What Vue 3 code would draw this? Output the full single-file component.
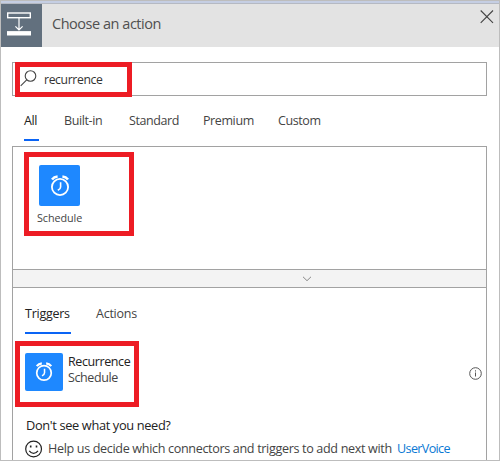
<script setup>
const categories = [
  { label: 'All', width: 15, active: true },
  { label: 'Built-in', width: 40 },
  { label: 'Standard', width: 49 },
  { label: 'Premium', width: 50 },
  { label: 'Custom', width: 43 },
]
</script>

<template>
  <main class="window">
    <div class="stripe"></div>
    <header class="header">
      <div class="header-icon">
        <svg width="41" height="43" viewBox="0 0 41 43" fill="none" stroke="#fff">
          <rect x="6.7" y="9" width="22.6" height="4.7" stroke-width="1.4" />
          <path d="M18 14v12M14.4 22.4l3.6 3.6 3.6-3.6" stroke-width="1.2" />
          <path d="M6 29.3h24" stroke-width="4.4" />
        </svg>
      </div>
      <h1>Choose an action</h1>
      <svg class="close" width="14" height="14" viewBox="0 0 14 14" fill="none" stroke="#444" stroke-width="1.1">
        <path d="M.7.5l12.3 12.3M13 .5L.7 12.8" />
      </svg>
    </header>

    <div class="search">
      <svg width="17" height="17" viewBox="0 0 17 17" fill="none" stroke="#444" stroke-width="1.1">
        <circle cx="10.5" cy="6" r="5.3" />
        <path d="M6.7 9.8L.7 15.9" />
      </svg>
      <span>recurrence</span>
      <i class="mark mark-search"></i>
    </div>

    <nav class="tabs">
      <span v-for="c in categories" :key="c.label" class="tab" :class="{ active: c.active }" :style="{ width: c.width + 'px' }">{{ c.label }}</span>
    </nav>

    <section class="panel">
      <div class="connectors">
        <div class="connector">
          <div class="tile large">
            <svg width="20" height="22" viewBox="0 0 20 22" fill="none" stroke="#fff">
              <circle cx="10" cy="12" r="8.1" stroke-width="1.8" />
              <path d="M10.6 7.3v4.6q0 2-2.8 3.4" stroke-width="1.6" />
              <path d="M2 4.5Q4 1.9 7.6 1.5M18 4.5Q16 1.9 12.4 1.5" stroke-width="2.5" />
            </svg>
          </div>
          <span>Schedule</span>
        </div>
        <i class="mark mark-connector"></i>
      </div>
      <div class="divider">
        <svg width="10" height="6" viewBox="0 0 10 6" fill="none" stroke="#888" stroke-width="1">
          <path d="M1 .8l4 3.9L9 .8" />
        </svg>
      </div>
      <nav class="tabs kinds">
        <span class="tab active triggers">Triggers</span>
        <span class="tab">Actions</span>
      </nav>
      <div class="result">
        <div class="tile">
          <svg width="18" height="20" viewBox="0 0 20 22" fill="none" stroke="#fff">
            <circle cx="10" cy="12" r="8.1" stroke-width="1.9" />
            <path d="M10.6 7.3v4.6q0 2-2.8 3.4" stroke-width="1.7" />
            <path d="M2 4.5Q4 1.9 7.6 1.5M18 4.5Q16 1.9 12.4 1.5" stroke-width="2.6" />
          </svg>
        </div>
        <div class="result-text">
          <strong>Recurrence</strong>
          <span>Schedule</span>
        </div>
        <svg class="info" width="13" height="13" viewBox="0 0 13 13" fill="none" stroke="#555">
          <circle cx="6.5" cy="6.5" r="5.8" stroke-width="1" />
          <path d="M6.5 5.5v4M6.5 3.3v1.2" stroke-width="1" />
        </svg>
        <i class="mark mark-result"></i>
      </div>
      <footer class="help">
        <h2>Don't see what you need?</h2>
        <p>
          <svg width="18" height="18" viewBox="0 0 18 18" fill="none" stroke="#222" stroke-width="1.2">
            <circle cx="8.6" cy="9" r="7.9" />
            <path d="M4.2 10.8Q8.6 16 13 10.8" />
            <path d="M4.9 6.5h1.6M10.7 6.5h1.6" stroke-width="1.8" />
          </svg>
          <span class="message">Help us decide which connectors and triggers to add next with</span>
          <a>UserVoice</a>
        </p>
      </footer>
    </section>
  </main>
</template>

<style>
body { margin: 0; background: #fff; }
</style>

<style scoped>
* { box-sizing: border-box; }
.window {
  width: 500px; height: 461px; overflow: hidden;
  display: flex; flex-direction: column;
  border: 1px solid #bdbdbd;
  background: #fff; color: #444;
  font: 12.5px/16px "Open Sans", sans-serif;
  letter-spacing: -0.4px; white-space: nowrap;
}
.stripe { flex: none; height: 3px; background: #c5cee3; border-bottom: 1px solid #b5b9c2; }
.header { flex: none; height: 43px; display: flex; align-items: center; background: #e3e3e3; }
.header-icon { width: 41px; height: 43px; background: #62707e; }
.header-icon svg { display: block; }
h1 { margin: 0 0 3px 10px; font-size: 14.5px; font-weight: 400; line-height: 20px; letter-spacing: -0.47px; color: #505050; }
.close { margin: 0 5px 18px auto; }
.search {
  position: relative; flex: none; height: 34px; width: 475px;
  margin: 15px 0 0 11px; padding-left: 7px;
  display: flex; align-items: center; gap: 7px;
  border: 1px solid #a2a2a2;
}
.search svg { margin-bottom: 2px; }
.search span { margin-top: 2px; font-size: 12.2px; letter-spacing: -0.35px; color: #333; }
.mark { position: absolute; border: 5px solid #ed1c24; pointer-events: none; }
.mark-search { left: 2px; top: -1px; width: 117px; height: 35px; }
.tabs { flex: none; display: flex; gap: 25px; padding-left: 23px; height: 50px; align-items: flex-start; padding-top: 17px; }
.tab { height: 28px; border-bottom: 2px solid transparent; }
.tab.active { border-color: #0a64f5; color: #222; font-weight: 500; }
.panel {
  flex: 1; width: 475px; margin-left: 11px;
  border: 1px solid #a2a2a2; border-bottom: 0;
  display: flex; flex-direction: column;
}
.connectors { position: relative; height: 122px; flex: none; padding: 18px 0 0 24px; }
.connector { display: flex; flex-direction: column; gap: 4px; font-size: 10.8px; letter-spacing: -0.08px; }
.connector span { line-height: 16px; }
.tile { flex: none; width: 38px; height: 38px; border-radius: 2px; background: #1e88ff; display: flex; align-items: center; justify-content: center; }
.tile.large { width: 41px; height: 41px; margin-left: 2px; }
.mark-connector { left: 11px; top: 5px; width: 110px; height: 84px; }
.divider { flex: none; height: 19px; display: flex; justify-content: center; padding: 6px 0 0 115px; background: #f3f3f3; border: solid #a2a2a2; border-width: 1px 0; }
.kinds { height: 47px; padding: 18px 0 0 12px; }
.kinds .tab { height: 28px; letter-spacing: -0.25px; }
.kinds .triggers { width: 46px; }
.result { position: relative; flex: none; height: 56px; margin-top: 18px; padding: 0 4px 0 12px; display: flex; align-items: flex-start; }
.result-text { display: flex; flex-direction: column; margin: 1px 0 0 5px; }
.result-text strong { font-weight: 500; color: #222; }
.result-text span { line-height: 16px; }
.info { margin: 14px 0 0 auto; }
.mark-result { left: 2px; top: -12px; width: 124px; height: 66px; }
.help { padding-left: 12px; margin-top: 7px; }
h2 { margin: 0 0 0 1px; font-size: 12.8px; line-height: 18px; font-weight: 500; letter-spacing: -0.35px; color: #222; }
p { margin: 5px 0 0; display: flex; align-items: center; font-size: 12.6px; line-height: 18px; letter-spacing: -0.345px; }
.message { width: 344px; margin: 1px 0 0 5px; }
a { margin: 1px 0 0 5px; letter-spacing: -0.65px; color: #0a78d4; }
</style>
